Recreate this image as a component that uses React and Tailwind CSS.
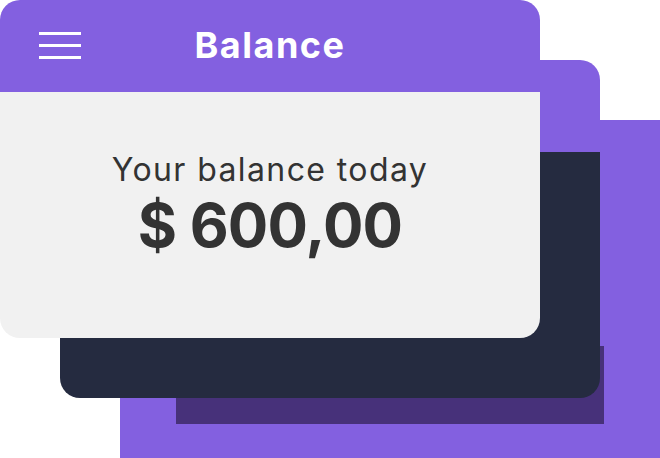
import React from "react";

function Card({ children, header, body, className }) {
    return (
        <div
            className={`absolute w-[540px] h-[338px] rounded-[20px] overflow-hidden flex flex-col ${className}`}
        >
            <div className="h-[92px] shrink-0 bg-[#8360e0]">{header}</div>
            <div className={`flex-1 ${body}`}>{children}</div>
        </div>
    );
}

function App() {
    return (
        <div
            className="relative w-[660px] h-[458px] overflow-hidden bg-white"
            style={{ fontFamily: "Inter, 'Noto Sans', sans-serif" }}
        >
            {/* back layers */}
            <div className="absolute left-[120px] top-[120px] w-[540px] h-[338px] bg-[#8360e0]" />
            <div className="absolute left-[176px] top-[346px] w-[428px] h-[78px] bg-[#47317a]" />
            <Card className="left-[60px] top-[60px]" body="bg-[#252b40]" />

            {/* front card */}
            <Card
                className="left-0 top-0"
                body="bg-[#f1f1f1]"
                header={
                    <div className="grid grid-cols-[1fr_auto_1fr] h-full">
                        <div className="pl-[39px] pt-[32px] flex flex-col gap-[9px]">
                            <span className="block w-[42px] h-[3px] bg-white" />
                            <span className="block w-[42px] h-[3px] bg-white" />
                            <span className="block w-[42px] h-[3px] bg-white" />
                        </div>
                        <h1 className="pt-[27px] text-[36px] leading-none font-bold tracking-[1.5px] text-white">
                            Balance
                        </h1>
                        <div />
                    </div>
                }
            >
                <div className="flex flex-col items-center pt-[62px] text-[#333333]">
                    <p className="text-[32px] leading-none tracking-[1.4px]">
                        Your balance today
                    </p>
                    <p className="mt-[9px] text-[60px] leading-none font-bold tracking-[-0.8px]">
                        $ 600,00
                    </p>
                </div>
            </Card>
        </div>
    );
}

export default App;
